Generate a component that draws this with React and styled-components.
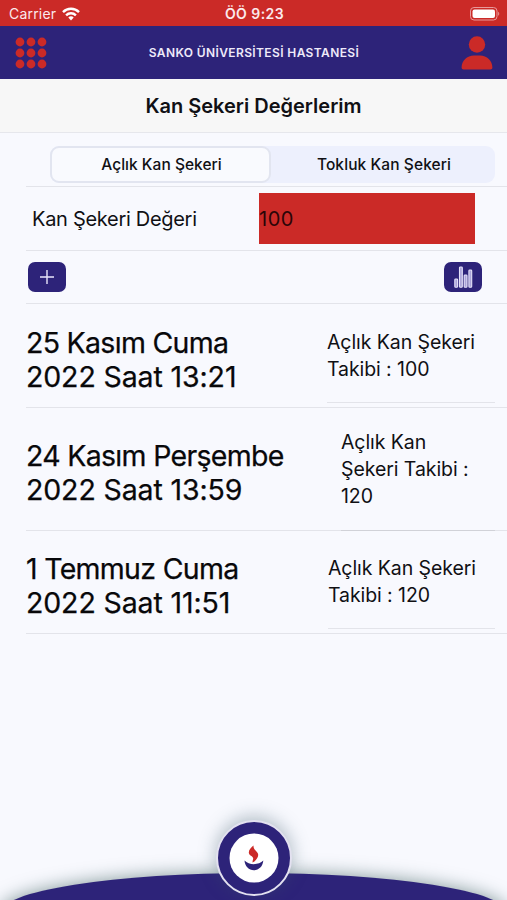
import React from 'react'
import styled, { createGlobalStyle } from 'styled-components'

const navy = '#2d2379'
const red = '#cb2a27'
const line = 'rgba(60, 60, 75, 0.11)'

const GlobalStyle = createGlobalStyle`
  * {
    box-sizing: border-box;
  }
  body {
    margin: 0;
    background: #f8f9fe;
    font-family: Inter, "Liberation Sans", sans-serif;
    color: #101014;
  }
  button {
    border: 0;
    padding: 0;
    background: none;
    font: inherit;
    color: inherit;
  }
`

const Screen = styled.div`
  display: flex;
  flex-direction: column;
  height: 900px;
  overflow: hidden;
`

const StatusBar = styled.div`
  display: grid;
  grid-template-columns: 1fr auto 1fr;
  align-items: center;
  height: 26px;
  padding: 1px 7px 0 9px;
  background: ${red};
  color: #fbe9ec;
  font-size: 14px;
`

const Carrier = styled.div`
  display: flex;
  align-items: center;
  gap: 6px;
  letter-spacing: 0.2px;
`

const Time = styled.div`
  font-weight: 600;
  letter-spacing: 0.45px;
`

const Battery = styled.svg`
  justify-self: end;
`

const NavBar = styled.header`
  display: flex;
  align-items: center;
  justify-content: space-between;
  height: 53px;
  padding: 0 14px 0 15px;
  background: ${navy};
  color: #eeeaf9;
`

const NavTitle = styled.div`
  font-size: 12px;
  font-weight: 600;
  letter-spacing: 0.38px;
`

const IconButton = styled.button`
  display: flex;
`

const TitleBar = styled.div`
  display: flex;
  align-items: center;
  justify-content: center;
  height: 54px;
  background: #f7f7f7;
  border-bottom: 1px solid #e6e7ec;

  h1 {
    margin: 0;
    font-size: 20px;
    font-weight: 600;
    letter-spacing: 0;
  }
`

const Content = styled.main`
  flex: 1;
  padding-top: 13px;
`

const Segments = styled.div`
  display: flex;
  height: 37px;
  margin: 0 12px 3px 50px;
  border-radius: 9px;
  background: #edf0fd;
`

const Segment = styled.button`
  flex: ${({ $active }) => ($active ? '0 0 221px' : '1')};
  padding-left: 2px;
  font-size: 15.5px;
  font-weight: 500;
  letter-spacing: ${({ $active }) => ($active ? '0.03px' : '0.1px')};
  border-radius: 9px;
  border: 2px solid ${({ $active }) => ($active ? '#e2e5f0' : 'transparent')};
  background: ${({ $active }) => ($active ? '#f9fafe' : 'transparent')};
`

const Row = styled.div`
  display: flex;
  margin-left: 26px;
  border-top: 1px solid ${line};
`

const ValueRow = styled(Row)`
  height: 64px;
  align-items: center;
  padding: 0 32px 0 6px;
  font-size: 20px;
`

const ValueLabel = styled.label`
  width: 227px;
  letter-spacing: -0.3px;
`

const ValueInput = styled.input`
  width: 216px;
  height: 51px;
  padding: 0;
  border: 0;
  border-radius: 0;
  outline: 0;
  background: ${red};
  color: #2b0507;
  font: inherit;
  letter-spacing: 0.5px;
`

const ActionRow = styled(Row)`
  height: 53px;
  align-items: center;
  justify-content: space-between;
  padding: 0 25px 0 2px;
`

const ActionButton = styled.button`
  display: flex;
  align-items: center;
  justify-content: center;
  width: 38px;
  height: 30px;
  border-radius: 7px;
  background: ${navy};
`

const Records = styled.div`
  border-bottom: 1px solid ${line};
  margin-left: 26px;
`

const Record = styled(Row)`
  height: ${({ $height }) => $height}px;
  margin-left: 0;
  padding-right: 12px;
  justify-content: space-between;
`

const RecordDate = styled.div`
  flex: 1;
  align-self: center;
  padding-top: ${({ $offset }) => $offset}px;
  font-size: 28.5px;
  line-height: 34px;
  letter-spacing: -0.12px;
  -webkit-text-stroke: 0.25px;
  color: #08080a;
  white-space: pre-line;

  &::first-line {
    letter-spacing: -0.7px;
  }
`

const RecordValue = styled.div`
  flex: none;
  width: ${({ $width }) => $width}px;
  height: ${({ $height }) => $height}px;
  padding-top: ${({ $top }) => $top}px;
  border-bottom: 1px solid ${line};
  font-size: 19.5px;
  line-height: 27px;
  letter-spacing: -0.08px;
  white-space: pre-line;
`

const Footer = styled.footer`
  position: relative;
  display: flex;
  justify-content: center;
  align-items: flex-end;
  height: 27px;
`

const Hill = styled.div`
  flex: none;
  width: 507px;
  height: 80px;
  margin-bottom: -53px;
  border-radius: 50%;
  background: ${navy};
  box-shadow: 0 0 18px rgba(50, 85, 85, 0.6);
`

const HomeButton = styled.button`
  position: absolute;
  left: 50%;
  bottom: 4px;
  display: flex;
  align-items: center;
  justify-content: center;
  width: 76px;
  height: 76px;
  margin-left: -37.5px;
  border: 2px solid #e3e1f0;
  border-radius: 50%;
  background: ${navy};
  box-shadow: 0 -3px 18px rgba(60, 90, 105, 0.4);
`

const records = [
  { date: '25 Kasım Cuma\n2022 Saat 13:21', value: 'Açlık Kan Şekeri\nTakibi : 100', height: 104, offset: 9, width: 168, top: 25, valueHeight: 99 },
  { date: '24 Kasım Perşembe\n2022 Saat 13:59', value: 'Açlık Kan\nŞekeri Takibi :\n120', height: 123, offset: 8, width: 154, top: 21, valueHeight: 123 },
  { date: '1 Temmuz Cuma\n2022 Saat 11:51', value: 'Açlık Kan Şekeri\nTakibi : 120', height: 103, offset: 8, width: 167, top: 24, valueHeight: 98 },
]

const dots = [5, 16, 27]

const bars = [
  { x: 0.8, y: 13 },
  { x: 5.5, y: 1 },
  { x: 10.2, y: 9 },
  { x: 14.9, y: 4 },
]

const App = () => (
  <Screen>
    <GlobalStyle />
    <StatusBar>
      <Carrier>
        Carrier
        <svg width="18" height="14" viewBox="0 0 18 14" fill="none" stroke="#fff" strokeWidth="2.4">
          <path d="M1 5.1C5.4.7 12.6.7 17 5.1" />
          <path d="M4.1 8.3c2.7-2.7 7.1-2.7 9.8 0" />
          <path d="M6.3 10.4c1.5-1.5 3.9-1.5 5.4 0L9 13.4z" fill="#fff" stroke="none" />
        </svg>
      </Carrier>
      <Time>ÖÖ 9:23</Time>
      <Battery width="30" height="14" viewBox="0 0 30 14">
        <rect x="0.5" y="0.5" width="26.5" height="12.5" rx="3.5" fill="none" stroke="#e79a9b" />
        <rect x="2.5" y="2.5" width="22.5" height="8.5" rx="2" fill="#fff" />
        <path d="M28.2 4.7c1.4.5 1.4 3.6 0 4.1z" fill="#e79a9b" />
      </Battery>
    </StatusBar>
    <NavBar>
      <IconButton aria-label="Menü">
        <svg width="32" height="32" viewBox="0 0 32 32" fill={red}>
          {dots.map(y => dots.map(x => <circle key={`${x}_${y}`} cx={x} cy={y} r="4.4" />))}
        </svg>
      </IconButton>
      <NavTitle>SANKO ÜNİVERSİTESİ HASTANESİ</NavTitle>
      <IconButton aria-label="Profil">
        <svg width="32" height="34" viewBox="0 0 32 34" fill={red}>
          <circle cx="16" cy="8.5" r="8.2" />
          <path d="M.6 31.5C.6 24.5 6 19.5 13 19.5h6c7 0 12.4 5 12.4 12 0 1.3-.7 2-2 2H2.6c-1.3 0-2-.7-2-2z" />
        </svg>
      </IconButton>
    </NavBar>
    <TitleBar>
      <h1>Kan Şekeri Değerlerim</h1>
    </TitleBar>
    <Content>
      <Segments>
        <Segment $active>Açlık Kan Şekeri</Segment>
        <Segment>Tokluk Kan Şekeri</Segment>
      </Segments>
      <ValueRow>
        <ValueLabel htmlFor="value">Kan Şekeri Değeri</ValueLabel>
        <ValueInput id="value" defaultValue="100" />
      </ValueRow>
      <ActionRow>
        <ActionButton aria-label="Ekle">
          <svg width="14" height="14" viewBox="0 0 14 14" stroke="#e9e6fb" strokeWidth="1.4">
            <path d="M7 0v14M0 7h14" />
          </svg>
        </ActionButton>
        <ActionButton aria-label="Grafik">
          <svg width="19" height="22" viewBox="0 0 19 22" fill="#aaa3d8" stroke="#e6e2fa" strokeWidth="1.1">
            {bars.map(({ x, y }) => (
              <rect key={x} x={x} y={y} width="2.8" height={21.2 - y} rx="0.8" />
            ))}
          </svg>
        </ActionButton>
      </ActionRow>
      <Records>
        {records.map(record => (
          <Record key={record.date} $height={record.height}>
            <RecordDate $offset={record.offset}>{record.date}</RecordDate>
            <RecordValue $width={record.width} $height={record.valueHeight} $top={record.top}>
              {record.value}
            </RecordValue>
          </Record>
        ))}
      </Records>
    </Content>
    <Footer>
      <Hill />
      <HomeButton aria-label="Ana sayfa">
        <svg width="50" height="50" viewBox="0 0 50 50">
          <circle cx="25" cy="25" r="24.5" fill="#fff" />
          <path d="M24.6 12.6c-2 1.6-4.8 3.8-4.8 6.8 0 3.4 4.600 3.400 4.400 6.200 0 1.400-.9 2.200-.6 4 3-1.800 5.800-4.600 5.600-7.800-.2-3.800-5.400-4.600-4.600-9.200z" fill={red} />
          <path d="M15.500 27.600c4.500 4.800 14.300 4.800 18.800 0-.5 6-4.400 9.600-9.400 9.600s-8.900-3.600-9.400-9.600z" fill={navy} />
        </svg>
      </HomeButton>
    </Footer>
  </Screen>
)

export default App
